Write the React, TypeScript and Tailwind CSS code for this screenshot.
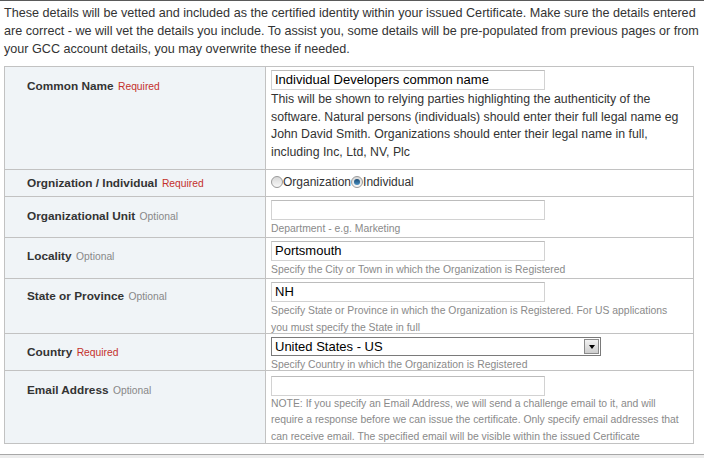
import React from "react";

const font = { fontFamily: '"Liberation Sans", Arial, sans-serif' };

function Label({ name, req, pt }: { name: string; req: boolean; pt: string }) {
  return (
    <div className={`pl-[22px] ${pt} leading-[16px] whitespace-nowrap`}>
      <span className="text-[11.8px] font-bold text-[#333]">{name}</span>{" "}
      <span className={req ? "text-[10.3px] text-[#c4302b]" : "text-[10.3px] text-[#888]"}>
        {req ? "Required" : "Optional"}
      </span>
    </div>
  );
}

function TextBox({ value }: { value?: string }) {
  return (
    <div className="w-[274px] h-[20px] border border-[#d2d2d2] border-t-[#bcbcbc] bg-white px-[3px] text-[13px] leading-[18px] text-black whitespace-nowrap">
      {value}
    </div>
  );
}

function Lines({ lines, cls }: { lines: string[]; cls: string }) {
  return (
    <div className={`${cls} whitespace-nowrap`}>
      {lines.map((l, i) => (
        <div key={i}>{l}</div>
      ))}
    </div>
  );
}

const helpCls = "text-[10.4px] leading-[17px] text-[#8a8a8a]";

function Radio({ checked }: { checked?: boolean }) {
  return (
    <span className="inline-flex items-center justify-center w-[12px] h-[12px] rounded-full border border-[#9a9a9a] bg-gradient-to-b from-[#d8d8d8] to-[#f8f8f8]">
      {checked && <span className="w-[6px] h-[6px] rounded-full bg-gradient-to-b from-[#1a4a74] to-[#4a92c4]" />}
    </span>
  );
}

function Row({
  h,
  label,
  req,
  children,
  pt = "pt-[3px]",
  lpt = "pt-[10px]",
}: {
  h: string;
  label: string;
  req: boolean;
  children: React.ReactNode;
  pt?: string;
  lpt?: string;
}) {
  return (
    <tr className={h}>
      <td className="w-[261px] p-0 align-top bg-[#f0f4f7] border border-[#c2c2c2]">
        <div className="h-[20px]">
          <Label name={label} req={req} pt={lpt} />
        </div>
      </td>
      <td className={`p-0 pl-[5px] align-top border border-[#c2c2c2] ${pt}`}>
        <div className="h-[16px]">{children}</div>
      </td>
    </tr>
  );
}

export default function App() {
  return (
    <div style={font} className="w-[704px] h-[458px] bg-white overflow-hidden flex flex-col">
      <div className="border-t border-[#5a5a5a] pt-[3px] pl-[4px] text-[12.6px] leading-[18px] text-[#333] whitespace-nowrap">
        <div>
          These details will be vetted and included as the certified identity within your issued Certificate. Make sure the details entered
        </div>
        <div>
          are correct - we will vet the details you include. To assist you, some details will be pre-populated from previous pages or from
        </div>
        <div>your GCC account details, you may overwrite these if needed.</div>
      </div>
      <table className="mt-[8px] ml-[4px] w-[690px] border-collapse table-fixed">
        <tbody>
          <Row h="h-[103px]" label="Common Name" req>
            <TextBox value="Individual Developers common name" />
            <Lines
              cls="mt-[1px] text-[12.3px] leading-[17.6px] text-[#333]"
              lines={[
                "This will be shown to relying parties highlighting the authenticity of the",
                "software. Natural persons (individuals) should enter their full legal name eg",
                "John David Smith. Organizations should enter their legal name in full,",
                "including Inc, Ltd, NV, Plc",
              ]}
            />
          </Row>
          <Row h="h-[27px]" label="Orgnization / Individual" req pt="pt-[4px]" lpt="pt-[4px]">
            <div className="flex items-center text-[12px] leading-[16px] text-[#333]">
              <Radio />
              <span>Organization</span>
              <Radio checked />
              <span>Individual</span>
            </div>
          </Row>
          <Row h="h-[41px]" label="Organizational Unit" req={false}>
            <TextBox />
            <Lines cls={helpCls} lines={["Department - e.g. Marketing"]} />
          </Row>
          <Row h="h-[41px]" label="Locality" req={false} lpt="pt-[9px]">
            <TextBox value="Portsmouth" />
            <Lines cls={helpCls} lines={["Specify the City or Town in which the Organization is Registered"]} />
          </Row>
          <Row h="h-[55px]" label="State or Province" req={false} lpt="pt-[8px]">
            <TextBox value="NH" />
            <Lines
              cls={helpCls}
              lines={[
                "Specify State or Province in which the Organization is Registered. For US applications",
                "you must specify the State in full",
              ]}
            />
          </Row>
          <Row h="h-[37px]" label="Country" req lpt="pt-[9px]">
            <div className="w-[330px] h-[19px] border border-[#7a7a7a] bg-white flex items-center justify-between pl-[3px] pr-[1px]">
              <span className="text-[13px] leading-[17px] text-black">United States - US</span>
              <span className="w-[15px] h-[15px] border border-[#8a8a8a] bg-gradient-to-b from-[#f2f2f2] to-[#cdcdcd] flex items-center justify-center">
                <span className="w-0 h-0 border-l-[3.5px] border-r-[3.5px] border-t-[4px] border-l-transparent border-r-transparent border-t-black" />
              </span>
            </div>
            <Lines cls={helpCls} lines={["Specify Country in which the Organization is Registered"]} />
          </Row>
          <Row h="h-[73px]" label="Email Address" req={false} pt="pt-[5px]">
            <TextBox />
            <Lines
              cls="text-[10.4px] leading-[16.3px] text-[#8a8a8a]"
              lines={[
                "NOTE: If you specify an Email Address, we will send a challenge email to it, and will",
                "require a response before we can issue the certificate. Only specify email addresses that",
                "can receive email. The specified email will be visible within the issued Certificate",
              ]}
            />
          </Row>
        </tbody>
      </table>
      <div className="mt-[10px] border-t border-[#a8a8a8] bg-[#ececec] flex-1" />
    </div>
  );
}
